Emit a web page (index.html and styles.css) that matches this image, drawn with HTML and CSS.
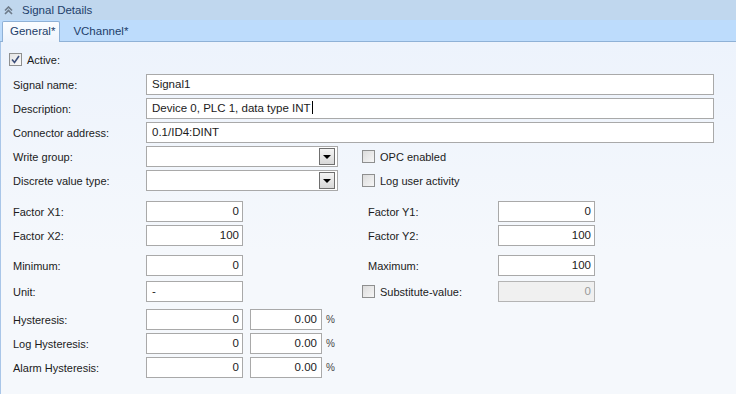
FILE: index.html
```html
<!DOCTYPE html>
<html lang="en">
<head>
    <meta charset="UTF-8">
    <title>Signal Details</title>
    <link rel="stylesheet" href="styles.css">
</head>
<body>
    <div class="panel">
        <div class="header">
            <svg class="collapse" width="9" height="9" viewBox="0 0 9 9">
                <path d="M1 4.5 L4.5 1 L8 4.5 M1 8 L4.5 4.5 L8 8" fill="none" stroke="#6d7a88" stroke-width="1.6"/>
            </svg>
            <span class="title">Signal Details</span>
        </div>
        <div class="tabs">
            <div class="tab active">General*</div>
            <div class="tab">VChannel*</div>
        </div>

        <div class="content">
            <div class="row row-active">
                <span class="check checked">
                    <svg width="9" height="9" viewBox="0 0 9 9"><path d="M1 4.5 L3.5 7.5 L8 1" fill="none" stroke="#3d4f7a" stroke-width="1.6"/></svg>
                </span>
                <span class="check-text">Active:</span>
            </div>

            <div class="row r-first">
                <span class="lbl">Signal name:</span>
                <div class="field wide">Signal1</div>
            </div>
            <div class="row">
                <span class="lbl">Description:</span>
                <div class="field wide">Device 0, PLC 1, data type INT<span class="caret"></span></div>
            </div>
            <div class="row">
                <span class="lbl">Connector address:</span>
                <div class="field wide">0.1/ID4:DINT</div>
            </div>
            <div class="row">
                <div class="left">
                    <span class="lbl">Write group:</span>
                    <div class="combo"><span class="combo-btn"></span></div>
                </div>
                <span class="check"></span>
                <span class="check-text">OPC enabled</span>
            </div>
            <div class="row">
                <div class="left">
                    <span class="lbl">Discrete value type:</span>
                    <div class="combo"><span class="combo-btn"></span></div>
                </div>
                <span class="check"></span>
                <span class="check-text">Log user activity</span>
            </div>

            <div class="row r-factor">
                <div class="left">
                    <span class="lbl">Factor X1:</span>
                    <div class="field num">0</div>
                </div>
                <span class="lbl-right">Factor Y1:</span>
                <div class="field num">0</div>
            </div>
            <div class="row">
                <div class="left">
                    <span class="lbl">Factor X2:</span>
                    <div class="field num">100</div>
                </div>
                <span class="lbl-right">Factor Y2:</span>
                <div class="field num">100</div>
            </div>

            <div class="row r-min">
                <div class="left">
                    <span class="lbl">Minimum:</span>
                    <div class="field num">0</div>
                </div>
                <span class="lbl-right">Maximum:</span>
                <div class="field num">100</div>
            </div>
            <div class="row r-unit">
                <div class="left">
                    <span class="lbl">Unit:</span>
                    <div class="field short">-</div>
                </div>
                <span class="check"></span>
                <span class="check-text sub">Substitute-value:</span>
                <div class="field num disabled">0</div>
            </div>

            <div class="row r-hyst">
                <span class="lbl">Hysteresis:</span>
                <div class="field num">0</div>
                <div class="field pct">0.00</div>
                <span class="unit">%</span>
            </div>
            <div class="row">
                <span class="lbl">Log Hysteresis:</span>
                <div class="field num">0</div>
                <div class="field pct">0.00</div>
                <span class="unit">%</span>
            </div>
            <div class="row">
                <span class="lbl">Alarm Hysteresis:</span>
                <div class="field num">0</div>
                <div class="field pct">0.00</div>
                <span class="unit">%</span>
            </div>
        </div>
    </div>
</body>
</html>
```

FILE: styles.css
```css
body {
    margin: 0;
    padding: 0;
    width: 736px;
    height: 394px;
    overflow: hidden;
    font-family: 'Liberation Sans', Arial, sans-serif;
    font-size: 11px;
    color: #1b1b1b;
}

.panel {
    display: flex;
    flex-direction: column;
    height: 394px;
}

.header {
    height: 20px;
    display: flex;
    align-items: center;
    background: #c0d7ee;
    padding-left: 4px;
}

.collapse {
    margin-right: 9px;
}

.title {
    color: #1e3e6a;
    font-size: 11.5px;
}

.tabs {
    height: 21px;
    display: flex;
    align-items: flex-end;
    background: #bddcfc;
    border-bottom: 1px solid #8fb1d6;
    padding-left: 2px;
}

.tab {
    height: 19px;
    line-height: 19px;
    padding: 0 13px 0 7px;
    color: #1e3e6a;
    font-size: 11.5px;
}

.tab.active {
    background: linear-gradient(#fbfdff, #eef4fc);
    border: 1px solid #8fb1d6;
    border-bottom: none;
    border-radius: 2px 2px 0 0;
    margin-bottom: -1px;
    height: 20px;
    padding: 0 4px 0 7px;
    margin-right: 6px;
}

.content {
    flex: 1;
    border-left: 1px solid #a9c6e8;
    background: linear-gradient(#edf3fc, #f5f8fc 60%);
    padding-left: 12px;
}

.row {
    display: flex;
    align-items: center;
    height: 21px;
    margin-top: 3px;
}

.row-active {
    margin-top: 7px;
    margin-left: -4px;
}

.r-first { margin-top: 4px; }
.r-factor { margin-top: 10px; }
.r-min { margin-top: 9px; }
.r-unit { margin-top: 5px; }
.r-hyst { margin-top: 7px; }

.left {
    display: flex;
    align-items: center;
    width: 349px;
}

.lbl {
    width: 133px;
    flex-shrink: 0;
}

.lbl-right {
    width: 130px;
    margin-left: 6px;
}

.field {
    box-sizing: border-box;
    height: 21px;
    line-height: 19px;
    border: 1px solid #a9a9a9;
    background: #fff;
    padding: 0 5px;
    white-space: nowrap;
    font-size: 11.5px;
}

.wide { width: 568px; }
.short { width: 97px; }

.num {
    width: 97px;
    text-align: right;
    padding-right: 3px;
}

.pct {
    width: 72px;
    margin-left: 7px;
    text-align: right;
    padding-right: 4px;
}

.unit {
    margin-left: 4px;
    font-size: 10px;
    color: #444;
}

.disabled {
    background: #f0f0f0;
    border-color: #b4b4b4;
    color: #9a9a9a;
}

.caret {
    display: inline-block;
    width: 1px;
    height: 13px;
    background: #000;
    vertical-align: -2px;
    margin-left: 1px;
}

.combo {
    box-sizing: border-box;
    width: 192px;
    height: 21px;
    border: 1px solid #a9a9a9;
    background: #fff;
    display: flex;
    align-items: center;
    justify-content: flex-end;
    padding-right: 2px;
}

.combo-btn {
    box-sizing: border-box;
    width: 16px;
    height: 17px;
    border: 1px solid #6f6f6f;
    background: linear-gradient(#f4f4f4, #d8d8d8);
    position: relative;
}

.combo-btn::after {
    content: "";
    position: absolute;
    left: 3px;
    top: 6px;
    border-left: 4px solid transparent;
    border-right: 4px solid transparent;
    border-top: 4px solid #000;
}

.check {
    box-sizing: border-box;
    width: 13px;
    height: 13px;
    border: 1px solid #8e8f8f;
    background: linear-gradient(135deg, #dcdcdc, #f6f6f6);
    display: flex;
    align-items: center;
    justify-content: center;
    flex-shrink: 0;
}

.check.checked {
    background: linear-gradient(135deg, #e4e4e4, #fafafa);
}

.check-text {
    margin-left: 5px;
}

.check-text.sub {
    width: 118px;
}
```
